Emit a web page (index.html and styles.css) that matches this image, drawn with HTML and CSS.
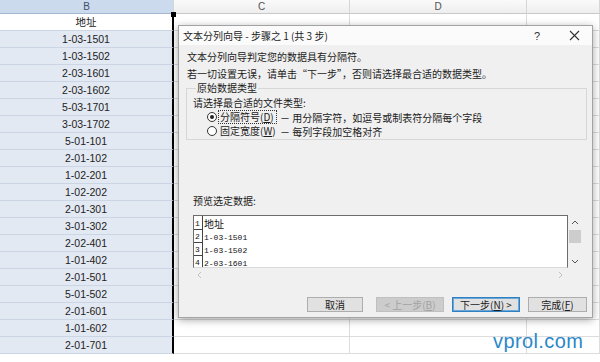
FILE: index.html
```html
<!DOCTYPE html>
<html lang="zh-CN">
<head>
    <meta charset="UTF-8">
    <title>文本分列向导</title>
    <link rel="stylesheet" href="styles.css">
</head>
<body>
    <div class="sheet" id="sheet">
        <div class="col-head selected">B</div>
        <div class="col-head">C</div>
        <div class="col-head">D</div>
        <div class="col-head"></div>
    </div>
    <div class="fill-handle"></div>

    <div class="dialog">
        <div class="title-bar">
            <span class="title">文本分列向导 - 步骤之 1 (共 3 步)</span>
            <span class="title-btn">?</span>
            <span class="title-btn">
                <svg width="11" height="11" viewBox="0 0 11 11"><path d="M1 1L10 10M10 1L1 10" stroke="#333" stroke-width="1.1" fill="none"/></svg>
            </span>
        </div>

        <div class="dialog-body">
            <p class="line">文本分列向导判定您的数据具有分隔符。</p>
            <p class="line">若一切设置无误，请单击“下一步”，否则请选择最合适的数据类型。</p>

            <fieldset class="group">
                <legend>原始数据类型</legend>
                <p class="group-line">请选择最合适的文件类型:</p>
                <div class="option">
                    <span class="radio checked"></span>
                    <span class="opt-name focused">分隔符号(<u>D</u>)</span>
                    <span class="opt-desc">－ 用分隔字符，如逗号或制表符分隔每个字段</span>
                </div>
                <div class="option">
                    <span class="radio"></span>
                    <span class="opt-name">固定宽度(<u>W</u>)</span>
                    <span class="opt-desc">－ 每列字段加空格对齐</span>
                </div>
            </fieldset>

            <p class="line preview-label">预览选定数据:</p>
            <div class="preview-wrap">
                <div class="preview">
                    <div class="prow first"><span class="num">1</span><span class="cjk">地址</span></div>
                    <div class="prow"><span class="num">2</span>1-03-1501</div>
                    <div class="prow"><span class="num">3</span>1-03-1502</div>
                    <div class="prow"><span class="num">4</span>2-03-1601</div>
                </div>
                <div class="vscroll">
                    <span class="arrow"><svg width="8" height="5" viewBox="0 0 8 5"><path d="M1 4L4 1L7 4" stroke="#555" fill="none"/></svg></span>
                    <span class="thumb"></span>
                    <span class="arrow"><svg width="8" height="5" viewBox="0 0 8 5"><path d="M1 1L4 4L7 1" stroke="#555" fill="none"/></svg></span>
                </div>
            </div>
            <div class="hscroll">
                <svg width="5" height="8" viewBox="0 0 5 8"><path d="M4 1L1 4L4 7" stroke="#c2c2c2" fill="none"/></svg>
                <svg width="5" height="8" viewBox="0 0 5 8"><path d="M1 1L4 4L1 7" stroke="#c2c2c2" fill="none"/></svg>
            </div>

            <div class="buttons">
                <button class="btn cancel">取消</button>
                <button class="btn wide" disabled>&lt; 上一步(<u>B</u>)</button>
                <button class="btn wide default">下一步(<u>N</u>) &gt;</button>
                <button class="btn finish">完成(<u>F</u>)</button>
            </div>
        </div>
    </div>

    <div class="watermark">vprol.com</div>

    <script>
        const addresses = [
            '地址', '1-03-1501', '1-03-1502', '2-03-1601', '2-03-1602',
            '5-03-1701', '3-03-1702', '5-01-101', '2-01-102', '1-02-201',
            '1-02-202', '2-01-301', '3-01-302', '2-02-401', '1-01-402',
            '2-01-501', '5-01-502', '2-01-601', '1-01-602', '2-01-701'
        ];

        // one row per address: column B holds the value, C/D/E stay empty
        document.getElementById('sheet').insertAdjacentHTML('beforeend', addresses.map((addr, i) => `
            <div class="cell sel${i === 0 ? ' active' : ''}">${addr}</div>
            <div class="cell"></div>
            <div class="cell"></div>
            <div class="cell"></div>
        `).join(''));
    </script>
</body>
</html>
```

FILE: styles.css
```css
body {
    margin: 0;
    width: 600px;
    height: 362px;
    overflow: hidden;
    position: relative;
    background: #fff;
    font-family: "Liberation Sans", "Noto Sans CJK SC", sans-serif;
}

/* spreadsheet behind the dialog */
.sheet {
    display: grid;
    grid-template-columns: 174px 176px 177px 1fr;
    grid-template-rows: 14px;
    grid-auto-rows: 17px;
}

.col-head {
    box-sizing: border-box;
    background: linear-gradient(#fafafa, #eeeeee);
    border-right: 1px solid #d6d6d6;
    border-bottom: 1px solid #c8c8c8;
    font-size: 10px;
    line-height: 13px;
    color: #505050;
    text-align: center;
}

.col-head.selected {
    background: #cbdaed;
    color: #3d4f66;
    border-bottom-color: #a4b8d3;
}

.cell {
    box-sizing: border-box;
    border-right: 1px solid #dcdcdc;
    border-bottom: 1px solid #dcdcdc;
    font-size: 10.5px;
    line-height: 16px;
    color: #222;
    text-align: center;
}

.cell.sel {
    background: #e3e9f2;
    border-bottom-color: #ccd5e3;
    border-right: 2px solid #000;
}

.cell.sel.active {
    background: #fff;
}

.fill-handle {
    position: absolute;
    left: 171px;
    top: 12px;
    width: 5px;
    height: 5px;
    background: #000;
}

/* text to columns wizard */
.dialog {
    position: absolute;
    left: 178px;
    top: 25px;
    width: 415px;
    height: 293px;
    box-sizing: border-box;
    background: #f0f0f0;
    border: 1px solid #a3a3a3;
    box-shadow: 0 2px 8px rgba(0, 0, 0, 0.35);
    font-family: "Noto Sans CJK SC", sans-serif;
    font-size: 10px;
    color: #1b1b1b;
}

.title-bar {
    height: 19px;
    display: flex;
    align-items: center;
    padding: 0 8px 0 4px;
    background: #fbfbfb;
}

.title {
    flex: 1;
}

.title-btn {
    width: 20px;
    margin-left: 17px;
    display: flex;
    justify-content: center;
    font-family: "Liberation Sans", sans-serif;
    font-size: 11px;
    color: #333;
}

.dialog-body {
    padding: 3px 5px 0 7px;
    display: flex;
    flex-direction: column;
}

.line {
    margin: 0;
    padding-left: 1px;
    line-height: 17px;
}

.group {
    margin: 0;
    padding: 2px 6px 1px;
    border: 1px solid #d7d7d7;
}

.group legend {
    padding: 0 1px;
    margin-left: 3px;
    line-height: 12px;
}

.group-line {
    margin: 0;
    line-height: 14px;
}

.option {
    display: flex;
    align-items: center;
    height: 14px;
    padding-left: 14px;
}

.radio {
    width: 10px;
    height: 10px;
    box-sizing: border-box;
    border: 1px solid #333;
    border-radius: 50%;
    background: #fff;
    margin-right: 2px;
    display: flex;
    align-items: center;
    justify-content: center;
}

.radio.checked::after {
    content: "";
    width: 4px;
    height: 4px;
    border-radius: 50%;
    background: #222;
}

.opt-name {
    width: 56px;
    line-height: 12px;
    padding-left: 1px;
}

.opt-name.focused {
    outline: 1px dotted #333;
    outline-offset: 0;
}

.opt-desc {
    margin-left: 4px;
}

.preview-label {
    margin-top: 52px;
    padding-left: 7px;
}

.preview-wrap {
    display: flex;
    margin: 6px 0 0 7px;
}

.preview {
    width: 375px;
    height: 53px;
    box-sizing: border-box;
    background: #fff;
    border: 1px solid #6c6c6c;
    border-bottom-color: #d9d9d9;
    overflow: hidden;
    font-family: "Liberation Mono", "Noto Sans CJK SC", monospace;
    font-size: 8px;
    color: #111;
}

.prow {
    display: flex;
    align-items: flex-end;
    height: 13px;
    line-height: 11px;
}

.prow.first {
    height: 14px;
}

.num {
    width: 9px;
    height: 100%;
    box-sizing: border-box;
    border-right: 1px solid #444;
    border-bottom: 1px solid #444;
    margin-right: 1px;
    padding-left: 1px;
    display: flex;
    align-items: flex-end;
}

.cjk {
    font-family: "Noto Sans CJK SC", sans-serif;
    font-size: 10px;
    line-height: 13px;
}

.vscroll {
    width: 14px;
    height: 53px;
    display: flex;
    flex-direction: column;
    align-items: center;
}

.arrow {
    height: 14px;
    display: flex;
    align-items: center;
}

.thumb {
    width: 12px;
    height: 13px;
    margin-top: 1px;
    background: #cdcdcd;
    flex: none;
}

.vscroll .arrow:last-child {
    margin-top: auto;
}

.hscroll {
    width: 375px;
    height: 13px;
    margin-left: 7px;
    box-sizing: border-box;
    padding: 0 5px 0 4px;
    display: flex;
    align-items: center;
    justify-content: space-between;
}

.buttons {
    display: flex;
    justify-content: flex-end;
    gap: 8px;
    margin-top: 16px;
}

.btn {
    height: 15px;
    padding: 0;
    box-sizing: border-box;
    background: #e1e1e1;
    border: 1px solid #adadad;
    font-family: "Noto Sans CJK SC", sans-serif;
    font-size: 10px;
    line-height: 12px;
    color: #1b1b1b;
}

.btn.cancel {
    width: 56px;
    margin-right: 5px;
}

.btn.wide {
    width: 68px;
}

.btn.finish {
    width: 59px;
}

.btn:disabled {
    background: #cccccc;
    border-color: #bfbfbf;
    color: #a3a3a3;
}

.btn.default {
    border-color: #2f7fc1;
    box-shadow: inset 0 0 0 1px #6aa6d8;
}

.watermark {
    position: absolute;
    left: 493px;
    top: 331px;
    font-size: 20px;
    line-height: 20px;
    letter-spacing: 0.4px;
    color: #2b88c8;
}
```
